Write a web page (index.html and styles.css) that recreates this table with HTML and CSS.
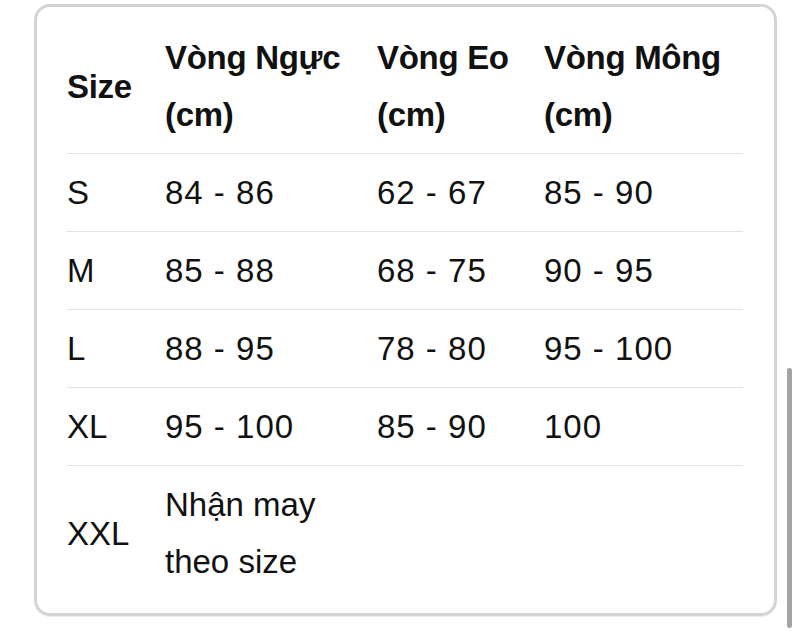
FILE: index.html
```html
<!DOCTYPE html>
<html lang="vi">
<head>
<meta charset="utf-8">
<title>Bảng size</title>
<link rel="stylesheet" href="styles.css">
</head>
<body>
<div class="card">
  <table class="size-table">
    <colgroup>
      <col class="c-size">
      <col class="c-nguc">
      <col class="c-eo">
      <col class="c-mong">
    </colgroup>
    <thead>
      <tr>
        <th>Size</th>
        <th>Vòng Ngực (cm)</th>
        <th>Vòng Eo (cm)</th>
        <th>Vòng Mông (cm)</th>
      </tr>
    </thead>
    <tbody>
      <tr><td>S</td><td class="num">84 - 86</td><td class="num">62 - 67</td><td class="num">85 - 90</td></tr>
      <tr><td>M</td><td class="num">85 - 88</td><td class="num">68 - 75</td><td class="num">90 - 95</td></tr>
      <tr><td>L</td><td class="num">88 - 95</td><td class="num">78 - 80</td><td class="num">95 - 100</td></tr>
      <tr><td>XL</td><td class="num">95 - 100</td><td class="num">85 - 90</td><td class="num">100</td></tr>
      <tr><td>XXL</td><td>Nhận may theo size</td><td></td><td></td></tr>
    </tbody>
  </table>
</div>
<p class="note">Bạn có thể chọn size theo số đo phù hợp nhất</p>
<div class="scroll-thumb"></div>
</body>
</html>
```

FILE: styles.css
```css
html, body {
  margin: 0;
  padding: 0;
  background: #ffffff;
  overflow: hidden;
}

body {
  font-family: "Liberation Sans", Arial, sans-serif;
  color: #111111;
  height: 640px;
}

.card {
  margin: 4px 0 0 34px;
  width: 676px;
  border: 3px solid #d4d4d4;
  border-radius: 16px;
  padding: 12px 31px 13px 30px;
  box-shadow: 0 1px 1px rgba(0, 0, 0, 0.08);
}

.size-table {
  width: 676px;
  table-layout: fixed;
  border-collapse: collapse;
  border-spacing: 0;
}

.c-size { width: 98px; }
.c-nguc { width: 212px; }
.c-eo { width: 167px; }
.c-mong { width: 199px; }

.size-table th,
.size-table td {
  text-align: left;
  vertical-align: middle;
  padding: 10px 14px 10px 0;
  font-size: 33px;
  line-height: 57px;
  border-bottom: 1px solid #e2e2e2;
}

.size-table th {
  font-weight: 700;
  letter-spacing: -0.3px;
}

.size-table td {
  font-weight: 400;
}

.size-table td.num {
  letter-spacing: 1px;
}

.size-table tbody tr:last-child td {
  border-bottom: none;
}

.note {
  margin: 14px 0 0 67px;
  font-size: 33px;
  line-height: 57px;
  white-space: nowrap;
}

.scroll-thumb {
  position: fixed;
  right: 8px;
  top: 368px;
  width: 5px;
  height: 260px;
  border-radius: 3px;
  background: #a4a4a4;
}
```
